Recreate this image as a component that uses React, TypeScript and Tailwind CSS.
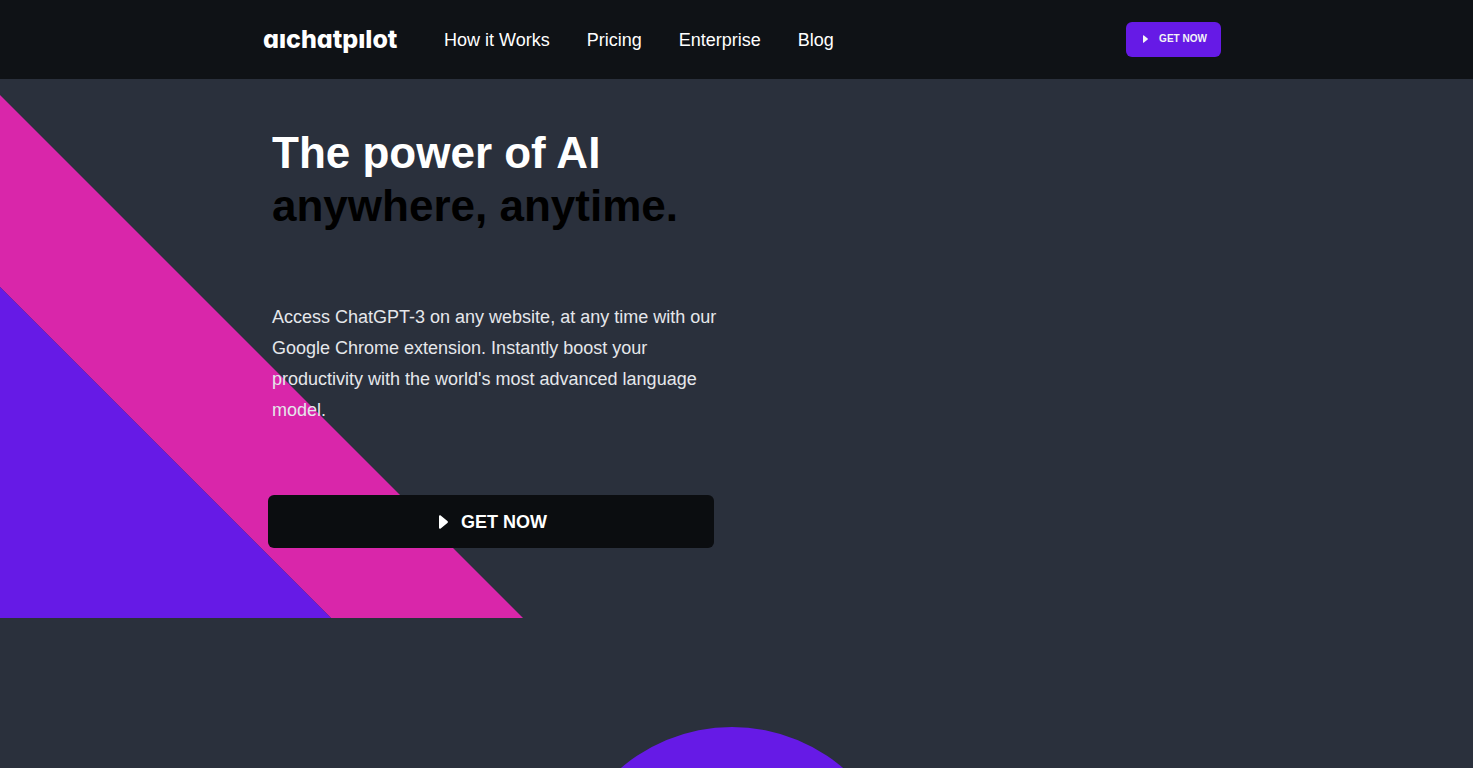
const navLinks = [
  { name: 'How it Works', href: '#how-it-works' },
  { name: 'Pricing', href: '#pricing' },
  { name: 'Enterprise', href: '#enterprise' },
  { name: 'Blog', href: '#blog' },
];

function PlayIcon({ className }: { className: string }) {
  return (
    <svg viewBox="0 0 9 14" className={className} fill="currentColor" aria-hidden="true">
      <path d="M0 1.2C0 .2 1 0 1.7.6L8.4 6.1c.7.6.7 1.2 0 1.8L1.7 13.4C1 14 0 13.8 0 12.8Z" />
    </svg>
  );
}

function Navbar() {
  return (
    <header className="bg-[#0f1216] text-white">
      <div className="mx-auto flex h-[79px] max-w-[969px] items-center pl-[11px]">
        <a
          href="#home"
          aria-label="aichatpilot"
          className="w-[136px] pb-0.5 font-['Inter',sans-serif] text-[25px] leading-8 font-extrabold whitespace-nowrap [font-feature-settings:'cv11']"
        >
          aıchatpılot
        </a>

        <nav className="ml-[45px] flex gap-[37px] text-lg">
          {navLinks.map((link) => (
            <a key={link.name} href={link.href} className="hover:text-gray-300">
              {link.name}
            </a>
          ))}
        </nav>

        <button
          type="button"
          className="ml-auto flex h-[35px] w-[95px] items-center justify-center gap-[11px] rounded-md bg-[#661ae6] pb-0.5 pl-[3px] text-[10px] font-bold text-gray-100"
        >
          <PlayIcon className="h-2 w-[5px]" />
          GET NOW
        </button>
      </div>
    </header>
  );
}

function Hero() {
  return (
    <section className="relative h-[539px]">
      {/* Diagonal bands */}
      <svg
        viewBox="0 0 523 523"
        className="absolute bottom-0 left-0 h-[523px] w-[523px]"
        aria-hidden="true"
      >
        <path d="M0 0 523 523H331L0 192Z" fill="#d926aa" />
        <path d="M0 192 331 523H0Z" fill="#661ae6" />
      </svg>

      <div className="relative mx-auto max-w-[969px] pt-[47px] pl-4">
        <div className="max-w-[446px]">
          <h1 className="pl-1 text-[44px] leading-[53px] font-bold text-white">
            The power of AI
            <span className="block text-black">anywhere, anytime.</span>
          </h1>

          <p className="mt-[70px] -mr-3 pl-1 text-lg leading-[31px] text-gray-200">
            Access ChatGPT-3 on any website, at any time with our Google Chrome extension. Instantly
            boost your productivity with the world's most advanced language model.
          </p>

          <button
            type="button"
            className="mt-[69px] flex h-[53px] w-full items-center justify-center gap-[13px] rounded-md bg-[#0b0d10] pl-1 text-lg font-bold text-white"
          >
            <PlayIcon className="h-3.5 w-[9px]" />
            GET NOW
          </button>
        </div>
      </div>
    </section>
  );
}

export default function App() {
  return (
    <div className="h-screen overflow-hidden bg-[#2a303c] font-['Liberation_Sans',Arial,sans-serif]">
      <Navbar />
      <main>
        <Hero />
        <section className="flex justify-center pt-[109px] pr-2.5">
          <div className="h-[342px] w-[342px] shrink-0 rounded-full bg-[#661ae6]" />
        </section>
      </main>
    </div>
  );
}
